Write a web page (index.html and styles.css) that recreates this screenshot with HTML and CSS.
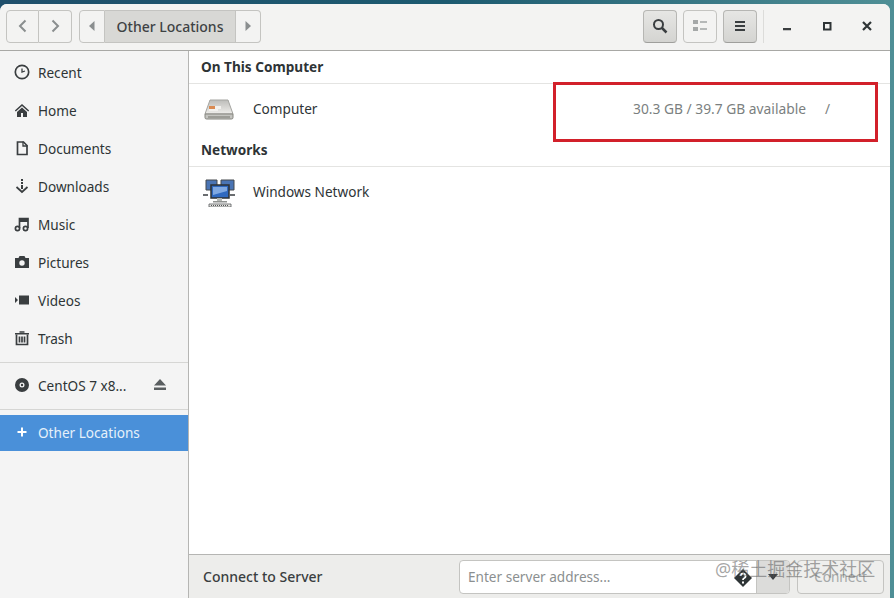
FILE: index.html
```html
<!DOCTYPE html>
<html lang="en">
<head>
<meta charset="utf-8">
<title>Other Locations</title>
<link rel="stylesheet" href="styles.css">
</head>
<body>
<div class="window">
  <header class="headerbar">
    <div class="btn-group nav-group">
      <button class="btn nav-btn"><svg width="16" height="16" viewBox="0 0 16 16"><path d="M10.500 2.500 5 8l5.500 5.500" class="chev"/></svg></button>
      <button class="btn nav-btn"><svg width="16" height="16" viewBox="0 0 16 16"><path d="M5.500 2.500 11 8l-5.500 5.500" class="chev"/></svg></button>
    </div>
    <div class="btn-group path-group">
      <button class="btn arrow-btn"><svg width="6" height="10" viewBox="0 0 6 10"><path d="M5.500 0v10L0 5z" class="tri"/></svg></button>
      <button class="btn path-btn">Other Locations</button>
      <button class="btn arrow-btn arrow-right"><svg width="6" height="10" viewBox="0 0 6 10"><path d="M.5 0v10L6 5z" class="tri"/></svg></button>
    </div>
    <div class="spacer"></div>
    <div class="tools">
      <button class="btn tool raised"><svg width="16" height="16" viewBox="0 0 16 16"><circle cx="6.500" cy="6.500" r="4.500" class="lens"/><path d="m10 10 4.500 4.500" class="handle"/></svg></button>
      <button class="btn tool"><svg width="14" height="12" viewBox="0 0 14 12"><path d="M0 0h5v4H0zM0 7h5v4H0z" class="listbox"/><path d="M7 1h7v2H7zM7 8h7v2H7z" class="listline"/></svg></button>
      <button class="btn tool raised"><svg width="12" height="12" viewBox="0 0 12 12"><path d="M1 1h10v2H1zM1 5h10v2H1zM1 9h10v2H1z" class="ink"/></svg></button>
    </div>
    <div class="wm-sep"></div>
    <div class="wm">
      <span class="wm-btn"><svg width="10" height="10" viewBox="0 0 10 10"><path d="M1 7h8v2.200H1z" class="ink"/></svg></span>
      <span class="wm-btn"><svg width="10" height="10" viewBox="0 0 10 10"><path d="M2 2h6.500v6.500H2z" class="wm-box"/></svg></span>
      <span class="wm-btn"><svg width="10" height="10" viewBox="0 0 10 10"><path d="m1 1 8 8M9 1 1 9" class="wm-x"/></svg></span>
    </div>
  </header>

  <div class="content">
    <aside class="sidebar">
      <ul class="places">
        <li class="place"><svg class="picon" width="16" height="16" viewBox="0 0 16 16"><circle cx="8" cy="8" r="6.700" class="ol"/><path d="M8 4.500V8l3-1" class="ol thin"/></svg>Recent</li>
        <li class="place"><svg class="picon" width="16" height="16" viewBox="0 0 16 16"><path d="M8 2 .8 8.500l1 .9L8 4l6.200 5.400 1-.9zM3 10v5h4v-4h2v4h4v-5L8 5.500z" class="ink"/></svg>Home</li>
        <li class="place"><svg class="picon" width="16" height="16" viewBox="0 0 16 16"><path d="M3.500 2h6L13 5.500V14.500H3.500z" class="ol"/><path d="M9 1.500V6h4.500" class="ol thin"/></svg>Documents</li>
        <li class="place"><svg class="picon" width="16" height="16" viewBox="0 0 16 16"><path d="M7 1h2v2H7zM7 4h2v2H7zM7 7h2v4H7z" class="ink"/><path d="M2.500 9 8 14l5.500-5" class="ol"/></svg>Downloads</li>
        <li class="place"><svg class="picon" width="16" height="16" viewBox="0 0 16 16"><path d="M5.500 12V2.500h8.500V12" class="ol"/><path d="M5.500 3h8.500v3H5.500z" class="ink"/><circle cx="3.500" cy="12.500" r="2.100" class="ol"/><circle cx="11.500" cy="12.500" r="2.100" class="ol"/></svg>Music</li>
        <li class="place"><svg class="picon" width="16" height="16" viewBox="0 0 16 16"><path fill-rule="evenodd" d="M1 4h3.500l1-2h5l1 2H15v10H1zm7 2.300a2.700 2.700 0 1 0 0 5.400 2.700 2.700 0 0 0 0-5.400z" class="ink"/></svg>Pictures</li>
        <li class="place"><svg class="picon" width="16" height="16" viewBox="0 0 16 16"><path d="M5 3.500h10v9H5zM1 5l3 3-3 3z" class="ink"/></svg>Videos</li>
        <li class="place"><svg class="picon" width="16" height="16" viewBox="0 0 16 16"><path d="M1 3h14v1.500H1zM5.500 1.200h5v1.500h-5z" class="ink"/><path d="M2.500 4.500v10h11v-10M5.500 6.500v6M8 6.500v6M10.500 6.500v6" class="ol"/></svg>Trash</li>
      </ul>
      <div class="side-rule"></div>
      <div class="place drive">
        <svg class="picon" width="16" height="16" viewBox="0 0 16 16"><path fill-rule="evenodd" d="M8 1a7 7 0 1 0 0 14A7 7 0 0 0 8 1zm0 4.500a2.500 2.500 0 1 1 0 5 2.500 2.500 0 0 1 0-5z" class="ink"/><circle cx="8" cy="8" r="1.200" class="ink"/></svg>
        <span class="drive-name">CentOS 7 x8...</span>
        <svg class="eject" width="14" height="12" viewBox="0 0 14 12"><path d="M7 0l6 6.500H1zM1 8.500h12V11H1z" class="eject-ink"/></svg>
      </div>
      <div class="side-rule"></div>
      <div class="place selected">
        <svg class="picon" width="16" height="16" viewBox="0 0 16 16"><path d="M7 3.500h2V7h3.500v2H9v3.500H7V9H3.500V7H7z" class="white"/></svg>Other Locations
      </div>
    </aside>

    <main class="main">
      <div class="listing">
        <h2 class="section">On This Computer</h2>
        <div class="row">
          <svg class="row-icon" width="32" height="32" viewBox="0 -1 32 32">
            <defs>
              <linearGradient id="d" x1="0" y1="0" x2="0" y2="1"><stop offset="0" stop-color="#bdbdba"/><stop offset="1" stop-color="#efeeeb"/></linearGradient>
            </defs>
            <path d="M7 7h18l5 14H2z" fill="url(#d)" stroke="#a5a5a1"/>
            <path d="M2 21h28v3.500q0 1.500-1.500 1.500h-25Q2 26 2 24.500z" fill="#c4c4c0" stroke="#85857f"/>
            <path d="M6 13h6v3H6z" fill="#d98a52"/>
            <path d="M12 13h6v3h-6zM6 16h9v2H6z" fill="#f2f1ee"/>
            <path d="M5 24h22" stroke="#77776f"/>
          </svg>
          <span class="row-name">Computer</span>
          <span class="row-info">30.3 GB / 39.7 GB available</span>
          <span class="row-path">/</span>
        </div>
        <h2 class="section">Networks</h2>
        <div class="row">
          <svg class="row-icon" width="32" height="32" viewBox="0 -3 32 32">
            <path d="M3 2h11v10H3zM18 2h13v10H18z" fill="#4a74b4" stroke="#45494c"/>
            <path d="M0 17h5M27 17h5" stroke="#6a6d70" stroke-width="2"/>
            <path d="M8 7h18v13H8z" fill="#2f69c0" stroke="#2e3133" stroke-width="1.500"/>
            <path d="M10 9h14v4l-14 4z" fill="#7fa8e2"/>
            <path d="M14 20h5v3h-5z" fill="#b5b7b3"/>
            <path d="M10 23h14v1.500H10z" fill="#8f9290"/>
            <path d="M6 26h22v3H6z" fill="#e8e8e4" stroke="#55585a" stroke-width=".8"/>
            <path d="M8 27.500h18" stroke="#55585a" stroke-dasharray="1 1"/>
          </svg>
          <span class="row-name">Windows Network</span>
        </div>
      </div>
      <footer class="footer">
        <span class="footer-label">Connect to Server</span>
        <div class="combo">
          <span class="combo-text">Enter server address...</span>
          <svg class="help" width="18" height="18" viewBox="0 0 18 18"><path d="M9 0l9 9-9 9-9-9z" class="help-d"/><path d="M6.500 7a2.500 2.500 0 1 1 3.500 2.300q-1 .5-1 1.700" class="help-q"/><path d="M8 12.500h2v2H8z" class="white"/></svg>
          <span class="combo-drop"><svg width="12" height="6" viewBox="0 0 12 6"><path d="M1 0h10L6 6z" class="ink"/></svg></span>
        </div>
        <button class="btn connect">Connect</button>
      </footer>
    </main>
  </div>
</div>
<div class="redbox"></div>
<div class="watermark">@稀土掘金技术社区</div>
</body>
</html>
```

FILE: styles.css
```css
* { box-sizing: border-box; }
html, body { margin: 0; padding: 0; }
body {
  width: 894px;
  height: 598px;
  overflow: hidden;
  position: relative;
  background: linear-gradient(90deg, #1f4f6b 0%, #1c5a70 50%, #4f8f96 100%);
  font-family: "Noto Sans", "Open Sans", sans-serif;
  font-size: 13.600px;
  color: #2e3436;
}
svg { display: block; flex: none; }
ul { list-style: none; margin: 0; padding: 0; }
button { font: inherit; color: inherit; padding: 0; }

.ink { fill: #3a3e40; }
.eject-ink { fill: #5a5e60; }
.white { fill: #fff; }
.ol { fill: none; stroke: #3a3e40; stroke-width: 1.700; }
.thin { stroke-width: 1.300; }
.chev { fill: none; stroke: #8a8e8f; stroke-width: 2; }
.tri { fill: #8a8e8f; }
.lens, .handle { fill: none; stroke: #3a3e40; stroke-width: 2; }
.handle { stroke-width: 2.500; }
.listbox { fill: #a5a8a8; }
.listline { fill: #b5b8b8; }
.wm-box { fill: none; stroke: #2e3436; stroke-width: 2; }
.wm-x { fill: none; stroke: #2e3436; stroke-width: 2.200; }

.window {
  position: absolute;
  top: 4px;
  left: 0;
  width: 890px;
  height: 594px;
  background: #fff;
  border-radius: 7px 7px 0 0;
  display: flex;
  flex-direction: column;
  overflow: hidden;
}

.headerbar {
  height: 47px;
  flex: none;
  display: flex;
  align-items: center;
  padding: 0 0 2px 6px;
  background: #f3f3f2;
  border-bottom: 1px solid #a8a8a5;
}
.btn {
  display: flex;
  align-items: center;
  justify-content: center;
  background: #f3f3f2;
  border: 1px solid #c4c4c1;
  border-radius: 4px;
}
.btn-group { display: flex; height: 33px; }
.btn-group .btn { border-radius: 0; height: 33px; }
.btn-group .btn + .btn { border-left: 0; }
.btn-group .btn:first-child { border-radius: 4px 0 0 4px; }
.btn-group .btn:last-child { border-radius: 0 4px 4px 0; }
.nav-btn { width: 33px; }
.path-group { margin-left: 7px; }
.arrow-btn { width: 26px; }
.arrow-right { width: 25px; }
.path-btn {
  width: 131px;
  background: #d8d8d5;
  color: #3e4244;
  font-size: 14px;
  font-weight: 500;
  border-right: 1px solid #c4c4c1;
}
.spacer { flex: 1; }
.tools { display: flex; gap: 6px; }
.tool { width: 34px; height: 33px; }
.raised {
  background: linear-gradient(#e6e6e4, #d4d4d1);
  border-color: #b6b6b3;
  border-bottom-color: #9f9f9c;
}
.wm-sep { width: 1px; height: 33px; background: #dcdcda; margin-left: 6px; }
.wm { display: flex; margin: 0 3px 0 3px; }
.wm-btn {
  width: 40px;
  height: 33px;
  display: flex;
  align-items: center;
  justify-content: center;
}

.content { flex: 1; display: flex; min-height: 0; }

.sidebar {
  width: 189px;
  flex: none;
  background: #f4f4f4;
  border-right: 1px solid #b5b5b3;
  padding-top: 2px;
}
.place {
  height: 38px;
  display: flex;
  align-items: center;
  padding-left: 14px;
  gap: 8px;
  color: #2e3436;
}
.drive-name { width: 108px; }
.eject { margin-left: -1px; }
.side-rule { height: 1px; background: #d6d6d4; margin-top: 5px; }
.drive { margin-top: 3px; }
.drive + .side-rule { margin-top: 5px; }
.selected {
  height: 36px;
  margin-top: 5px;
  padding-bottom: 2px;
  background: #4a90d9;
  color: #e6f0fa;
}

.main { flex: 1; display: flex; flex-direction: column; min-width: 0; }
.listing { flex: 1; background: #fff; }
.section {
  margin: 0;
  height: 33px;
  padding: 6px 0 0 12px;
  font-size: 13.600px;
  font-weight: 700;
  line-height: 19px;
  color: #2e3436;
  border-bottom: 1px solid #e4e4e2;
}
.row {
  height: 50px;
  display: flex;
  align-items: center;
  padding: 0 0 2px 14px;
}
.row-name { width: 380px; margin-left: 18px; color: #2e3436; }
.row-info { width: 192px; font-size: 13.800px; color: #7b7f80; }
.row-path { color: #7b7f80; }

.footer {
  height: 44px;
  flex: none;
  display: flex;
  align-items: center;
  background: #ededeb;
  border-top: 1px solid #b5b5b3;
  padding-left: 14px;
}
.footer-label { width: 256px; font-size: 14px; font-weight: 500; color: #3a3e40; }
.combo {
  width: 331px;
  height: 34px;
  display: flex;
  align-items: center;
  background: #fff;
  border: 1px solid #c4c4c1;
  border-radius: 4px;
  padding-left: 8px;
}
.combo-text { flex: 1; color: #8b8f90; }
.help { margin-right: 4px; margin-top: 2px; }
.help-d { fill: #2e3436; }
.help-q { fill: none; stroke: #fff; stroke-width: 1.800; }
.combo-drop {
  width: 33px;
  height: 32px;
  display: flex;
  align-items: center;
  justify-content: center;
  background: #dcdcda;
  border-left: 1px solid #c4c4c1;
  border-radius: 0 3px 3px 0;
}
.connect {
  width: 87px;
  height: 34px;
  margin-left: 7px;
  color: #a5a8a8;
  background: #efefed;
}

.redbox {
  position: absolute;
  left: 553px;
  top: 82px;
  width: 325px;
  height: 60px;
  border: 3px solid #d2202a;
}
.watermark {
  position: absolute;
  left: 715px;
  top: 558px;
  font-family: "Noto Sans", "Noto Sans CJK SC", sans-serif;
  font-size: 18px;
  line-height: 22px;
  color: rgba(90, 90, 90, .55);
  white-space: nowrap;
}
```
